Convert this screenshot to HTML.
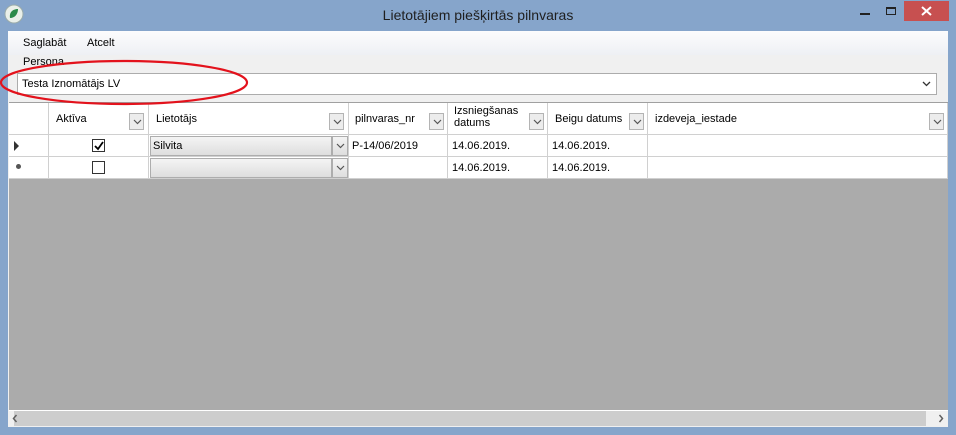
<!DOCTYPE html>
<html><head><style>
*{margin:0;padding:0;box-sizing:border-box}
body{width:956px;height:435px;background:#86a5cb;font-family:"Liberation Sans",sans-serif;font-size:11px;color:#000;position:relative;overflow:hidden}
.abs{position:absolute}
.cell{position:absolute;border-right:1px solid #d0d0d0;border-bottom:1px solid #d0d0d0;background:#fff}
.dd{position:absolute;width:15px;height:17px;border:1px solid #b4b4b4;background:#ececec}
.dd svg,.cv svg{position:absolute;left:3px;top:5px}
.cb{position:absolute;width:13px;height:13px;border:1px solid #333;background:#fff}
.cmb{position:absolute;background:linear-gradient(#f4f4f4,#dedede);border:1px solid #adadad}
</style></head><body>
<svg class="abs" style="left:4px;top:4px" width="20" height="20"><circle cx="10" cy="10" r="9" fill="#e9efe9" stroke="#9aa" stroke-width="1"/><path d="M6 14 C5 8 9 5 14 5 C14 10 11 14 6 14Z" fill="#2a8a4a"/></svg>
<div class="abs" style="left:0;top:7px;width:956px;text-align:center;font-size:14px;color:#1f1f1f">Lietotājiem piešķirtās pilnvaras</div>
<div class="abs" style="left:860px;top:13px;width:10px;height:2px;background:#222"></div>
<div class="abs" style="left:886px;top:7px;width:10px;height:8px;border:1px solid #222;border-top-width:2px"></div>
<div class="abs" style="left:904px;top:1px;width:45px;height:20px;background:#c75050"></div>
<svg class="abs" style="left:921px;top:6px" width="11" height="10"><path d="M1 1L10 9M10 1L1 9" stroke="#fff" stroke-width="2"/></svg>
<div class="abs" style="left:8px;top:31px;width:940px;height:396px;background:#f0f0f0"></div>
<div class="abs" style="left:8px;top:31px;width:940px;height:24px;background:linear-gradient(#fcfcfd,#eef0f4)"></div>
<div class="abs" style="left:23px;top:37px">Saglabāt</div>
<div class="abs" style="left:87px;top:37px">Atcelt</div>
<div class="abs" style="left:23px;top:56px">Persona</div>
<div class="abs" style="left:17px;top:73px;width:920px;height:22px;border:1px solid #acacac;background:#fff"></div>
<div class="abs" style="left:22px;top:78px">Testa Iznomātājs LV</div>
<svg class="abs" style="left:922px;top:81px" width="9" height="6"><path d="M1 1L4.5 4.5L8 1" stroke="#333" stroke-width="1.3" fill="none"/></svg>
<div class="abs" style="left:9px;top:102px;width:939px;height:308px;background:#ababab;border-top:1px solid #a0a0a0"></div>
<!-- header -->
<div class="cell" style="left:9px;top:103px;width:40px;height:32px"></div>
<div class="cell" style="left:49px;top:103px;width:100px;height:32px"></div>
<div class="cell" style="left:149px;top:103px;width:200px;height:32px"></div>
<div class="cell" style="left:349px;top:103px;width:99px;height:32px"></div>
<div class="cell" style="left:448px;top:103px;width:100px;height:32px"></div>
<div class="cell" style="left:548px;top:103px;width:100px;height:32px"></div>
<div class="cell" style="left:648px;top:103px;width:300px;height:32px"></div>
<div class="abs" style="left:56px;top:113px">Aktīva</div>
<div class="abs" style="left:156px;top:113px">Lietotājs</div>
<div class="abs" style="left:355px;top:113px">pilnvaras_nr</div>
<div class="abs" style="left:454px;top:105px;line-height:12px">Izsniegšanas<br>datums</div>
<div class="abs" style="left:555px;top:113px">Beigu datums</div>
<div class="abs" style="left:655px;top:113px">izdeveja_iestade</div>
<div class="dd" style="left:129px;top:113px"><svg width="9" height="6"><path d="M1 1L4.5 4.5L8 1" stroke="#555" stroke-width="1.2" fill="none"/></svg></div>
<div class="dd" style="left:329px;top:113px"><svg width="9" height="6"><path d="M1 1L4.5 4.5L8 1" stroke="#555" stroke-width="1.2" fill="none"/></svg></div>
<div class="dd" style="left:429px;top:113px"><svg width="9" height="6"><path d="M1 1L4.5 4.5L8 1" stroke="#555" stroke-width="1.2" fill="none"/></svg></div>
<div class="dd" style="left:529px;top:113px"><svg width="9" height="6"><path d="M1 1L4.5 4.5L8 1" stroke="#555" stroke-width="1.2" fill="none"/></svg></div>
<div class="dd" style="left:629px;top:113px"><svg width="9" height="6"><path d="M1 1L4.5 4.5L8 1" stroke="#555" stroke-width="1.2" fill="none"/></svg></div>
<div class="dd" style="left:929px;top:113px"><svg width="9" height="6"><path d="M1 1L4.5 4.5L8 1" stroke="#555" stroke-width="1.2" fill="none"/></svg></div>
<!-- row 1 -->
<div class="cell" style="left:9px;top:135px;width:40px;height:22px"></div>
<div class="abs" style="left:14px;top:141px;width:0;height:0;border-left:5px solid #333;border-top:5px solid transparent;border-bottom:5px solid transparent"></div>
<div class="cell" style="left:49px;top:135px;width:100px;height:22px"></div>
<div class="cb" style="left:92px;top:139px"><svg style="position:absolute;left:1px;top:1px" width="10" height="10"><path d="M1 5L4 8L9 1" stroke="#000" stroke-width="1.8" fill="none"/></svg></div>
<div class="cell" style="left:149px;top:135px;width:200px;height:22px"></div>
<div class="cmb" style="left:150px;top:136px;width:182px;height:20px"></div>
<div class="cmb" style="left:332px;top:136px;width:16px;height:20px"></div>
<svg class="abs" style="left:336px;top:143px" width="9" height="6"><path d="M1 1L4.5 4.5L8 1" stroke="#555" stroke-width="1.2" fill="none"/></svg>
<div class="abs" style="left:153px;top:140px">Silvita</div>
<div class="cell" style="left:349px;top:135px;width:99px;height:22px"></div>
<div class="abs" style="left:352px;top:140px">P-14/06/2019</div>
<div class="cell" style="left:448px;top:135px;width:100px;height:22px"></div>
<div class="abs" style="left:452px;top:140px">14.06.2019.</div>
<div class="cell" style="left:548px;top:135px;width:100px;height:22px"></div>
<div class="abs" style="left:552px;top:140px">14.06.2019.</div>
<div class="cell" style="left:648px;top:135px;width:300px;height:22px"></div>
<!-- row 2 -->
<div class="cell" style="left:9px;top:157px;width:40px;height:22px"></div>
<div class="abs" style="left:16px;top:164px;width:5px;height:5px;border-radius:50%;background:#555"></div>
<div class="cell" style="left:49px;top:157px;width:100px;height:22px"></div>
<div class="cb" style="left:92px;top:161px"></div>
<div class="cell" style="left:149px;top:157px;width:200px;height:22px"></div>
<div class="cmb" style="left:150px;top:158px;width:182px;height:20px"></div>
<div class="cmb" style="left:332px;top:158px;width:16px;height:20px"></div>
<svg class="abs" style="left:336px;top:165px" width="9" height="6"><path d="M1 1L4.5 4.5L8 1" stroke="#555" stroke-width="1.2" fill="none"/></svg>
<div class="cell" style="left:349px;top:157px;width:99px;height:22px"></div>
<div class="cell" style="left:448px;top:157px;width:100px;height:22px"></div>
<div class="abs" style="left:452px;top:162px">14.06.2019.</div>
<div class="cell" style="left:548px;top:157px;width:100px;height:22px"></div>
<div class="abs" style="left:552px;top:162px">14.06.2019.</div>
<div class="cell" style="left:648px;top:157px;width:300px;height:22px"></div>
<!-- scrollbar -->
<div class="abs" style="left:9px;top:410px;width:939px;height:17px;background:#f0f0f0;border-top:1px solid #fff"></div>
<div class="abs" style="left:14px;top:411px;width:494px;height:15px;background:#cdcdcd"></div>
<div class="abs" style="left:14px;top:411px;width:494px;height:15px;background:#cdcdcd;left:14px;width:494px;display:none"></div>
<div class="abs" style="left:14px;top:411px;width:494px;height:15px;background:#cdcdcd;width:494px;display:none"></div>
<div class="abs" style="left:14px;top:411px;height:15px;background:#cdcdcd;width:494px;display:none"></div>
<div class="abs" style="left:14px;top:411px;width:494px;height:15px;background:#cdcdcd;display:none"></div>
<div class="abs" style="left:14px;top:411px;width:494px;height:15px;display:none"></div>
<div class="abs" style="left:14px;top:411px;width:494px;height:15px;background:#cdcdcd;display:none"></div>
<div class="abs" style="left:14px;top:411px;width:494px;height:15px;background:#cdcdcd;display:none"></div>
<div class="abs" style="left:14px;top:411px;width:494px;height:15px;background:#cdcdcd;display:none"></div>
<div class="abs" style="left:14px;top:411px;width:494px;height:15px;background:#cdcdcd;display:none"></div>
<div class="abs" style="left:14px;top:411px;width:494px;height:15px;background:#cdcdcd;display:none"></div>
<div class="abs" style="left:14px;top:411px;width:494px;height:15px;background:#cdcdcd;display:none"></div>
<div class="abs" style="left:14px;top:411px;width:494px;height:15px;background:#cdcdcd;display:none"></div>
<div class="abs" style="left:14px;top:411px;width:494px;height:15px;background:#cdcdcd;display:none"></div>
<div class="abs" style="left:14px;top:411px;width:494px;height:15px;background:#cdcdcd;display:none"></div>
<div class="abs" style="left:14px;top:411px;width:494px;height:15px;background:#cdcdcd;display:none"></div>
<div class="abs" style="left:14px;top:411px;width:494px;height:15px;background:#cdcdcd;display:none"></div>
<div class="abs" style="left:14px;top:411px;width:494px;height:15px;background:#cdcdcd;display:none"></div>
<div class="abs" style="left:22px;top:411px;width:904px;height:15px;background:#cdcdcd"></div>
<svg class="abs" style="left:12px;top:414px" width="6" height="9"><path d="M4.5 1L1.5 4.5L4.5 8" stroke="#606060" stroke-width="1.5" fill="none"/></svg>
<svg class="abs" style="left:938px;top:414px" width="6" height="9"><path d="M1.5 1L4.5 4.5L1.5 8" stroke="#606060" stroke-width="1.5" fill="none"/></svg>
<!-- red annotation ellipse -->
<svg class="abs" style="left:0;top:58px" width="252" height="50"><ellipse cx="124" cy="24.5" rx="123" ry="21.5" fill="none" stroke="#e3121c" stroke-width="2.2"/></svg>
</body></html>
